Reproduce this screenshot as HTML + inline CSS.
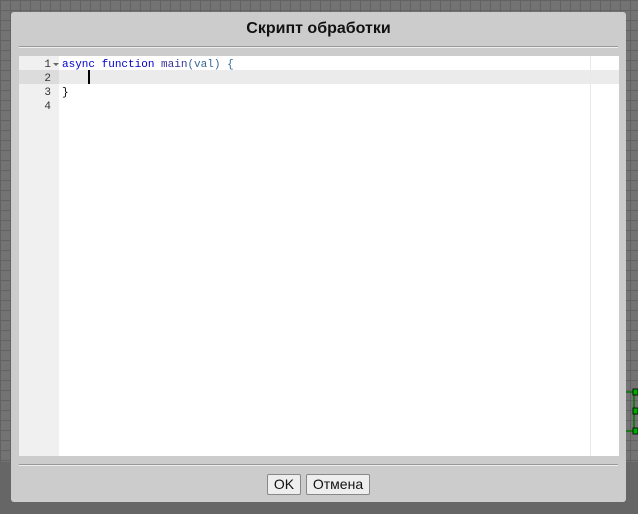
<!DOCTYPE html>
<html><head><meta charset="utf-8"><style>
body{margin:0;width:638px;height:514px;overflow:hidden;position:relative;background:#666;font-family:"Liberation Sans",sans-serif}
.grid{position:absolute;left:0;top:0;width:638px;height:462px;background-color:#737373;background-image:linear-gradient(#626262 1px,transparent 1px),linear-gradient(90deg,#626262 1px,transparent 1px);background-size:10px 10px}
.dlg{position:absolute;left:11px;top:12px;width:615px;height:490px;background:#ccc;border-radius:3px}
.title{position:absolute;top:8px;left:0;right:0;text-align:center;font-weight:bold;font-size:16px;color:#111}
.hr{position:absolute;left:8px;right:8px;height:1px;background:#999;border-bottom:1px solid #eee}
.ed{position:absolute;left:8px;top:44px;width:600px;height:400px;background:#fff;font-family:"Liberation Mono",monospace;font-size:11px}
.gut{position:absolute;left:0;top:0;width:40px;height:400px;background:#f0f0f0}
.ln{position:absolute;left:0;width:32px;text-align:right;color:#333;line-height:14px;padding-top:2px;height:12px}
.act{position:absolute;left:0;width:600px;top:14px;height:14px;background:#ebebeb}
.pm{position:absolute;left:571px;top:0;width:1px;height:400px;background:#e8e8e8}
.code{position:absolute;left:43px;line-height:14px;white-space:pre;color:#000;padding-top:2px}
.btn{position:absolute;top:462px;height:19px;border:1px solid #888;border-radius:2px;background:#eee;font-size:14px;line-height:19px;text-align:center;color:#111}
</style></head><body>
<div class="grid"></div>
<svg style="position:absolute;left:626px;top:388px" width="12" height="48"><path d="M0 4h8M0 43h8M8 4v39" stroke="#070" stroke-width="1.5" fill="none"/><rect x="7" y="1" width="5" height="6" fill="#0a0" stroke="#000" stroke-width=".8"/><rect x="7" y="20" width="5" height="6" fill="#0a0" stroke="#000" stroke-width=".8"/><rect x="7" y="40" width="5" height="6" fill="#0a0" stroke="#000" stroke-width=".8"/></svg>
<div class="dlg">
<div class="title">Скрипт обработки</div>
<div class="hr" style="top:34px"></div>
<div class="ed">
<div class="gut"></div>
<div class="act"></div>
<div class="pm"></div>
<div class="ln" style="top:0">1</div><div style="position:absolute;left:34px;top:7px;border:3px solid transparent;border-top:3px solid #666;border-bottom:none"></div>
<div class="ln" style="top:14px;background:#dcdcdc;width:40px;padding-right:8px;box-sizing:border-box;height:14px">2</div>
<div class="ln" style="top:28px">3</div>
<div class="ln" style="top:42px">4</div>
<div class="code" style="top:0"><span style="color:#00c">async</span> <span style="color:#00c">function</span> <span style="color:#339">main</span><span style="color:#369">(val)</span> <span style="color:#369">{</span></div>
<div style="position:absolute;left:69px;top:14px;width:2px;height:14px;background:#000"></div>
<div class="code" style="top:28px">}</div>
</div>
<div class="hr" style="top:452px"></div>
<div class="btn" style="left:256px;width:32px">OK</div>
<div class="btn" style="left:295px;width:62px">Отмена</div>
</div>
</body></html>
